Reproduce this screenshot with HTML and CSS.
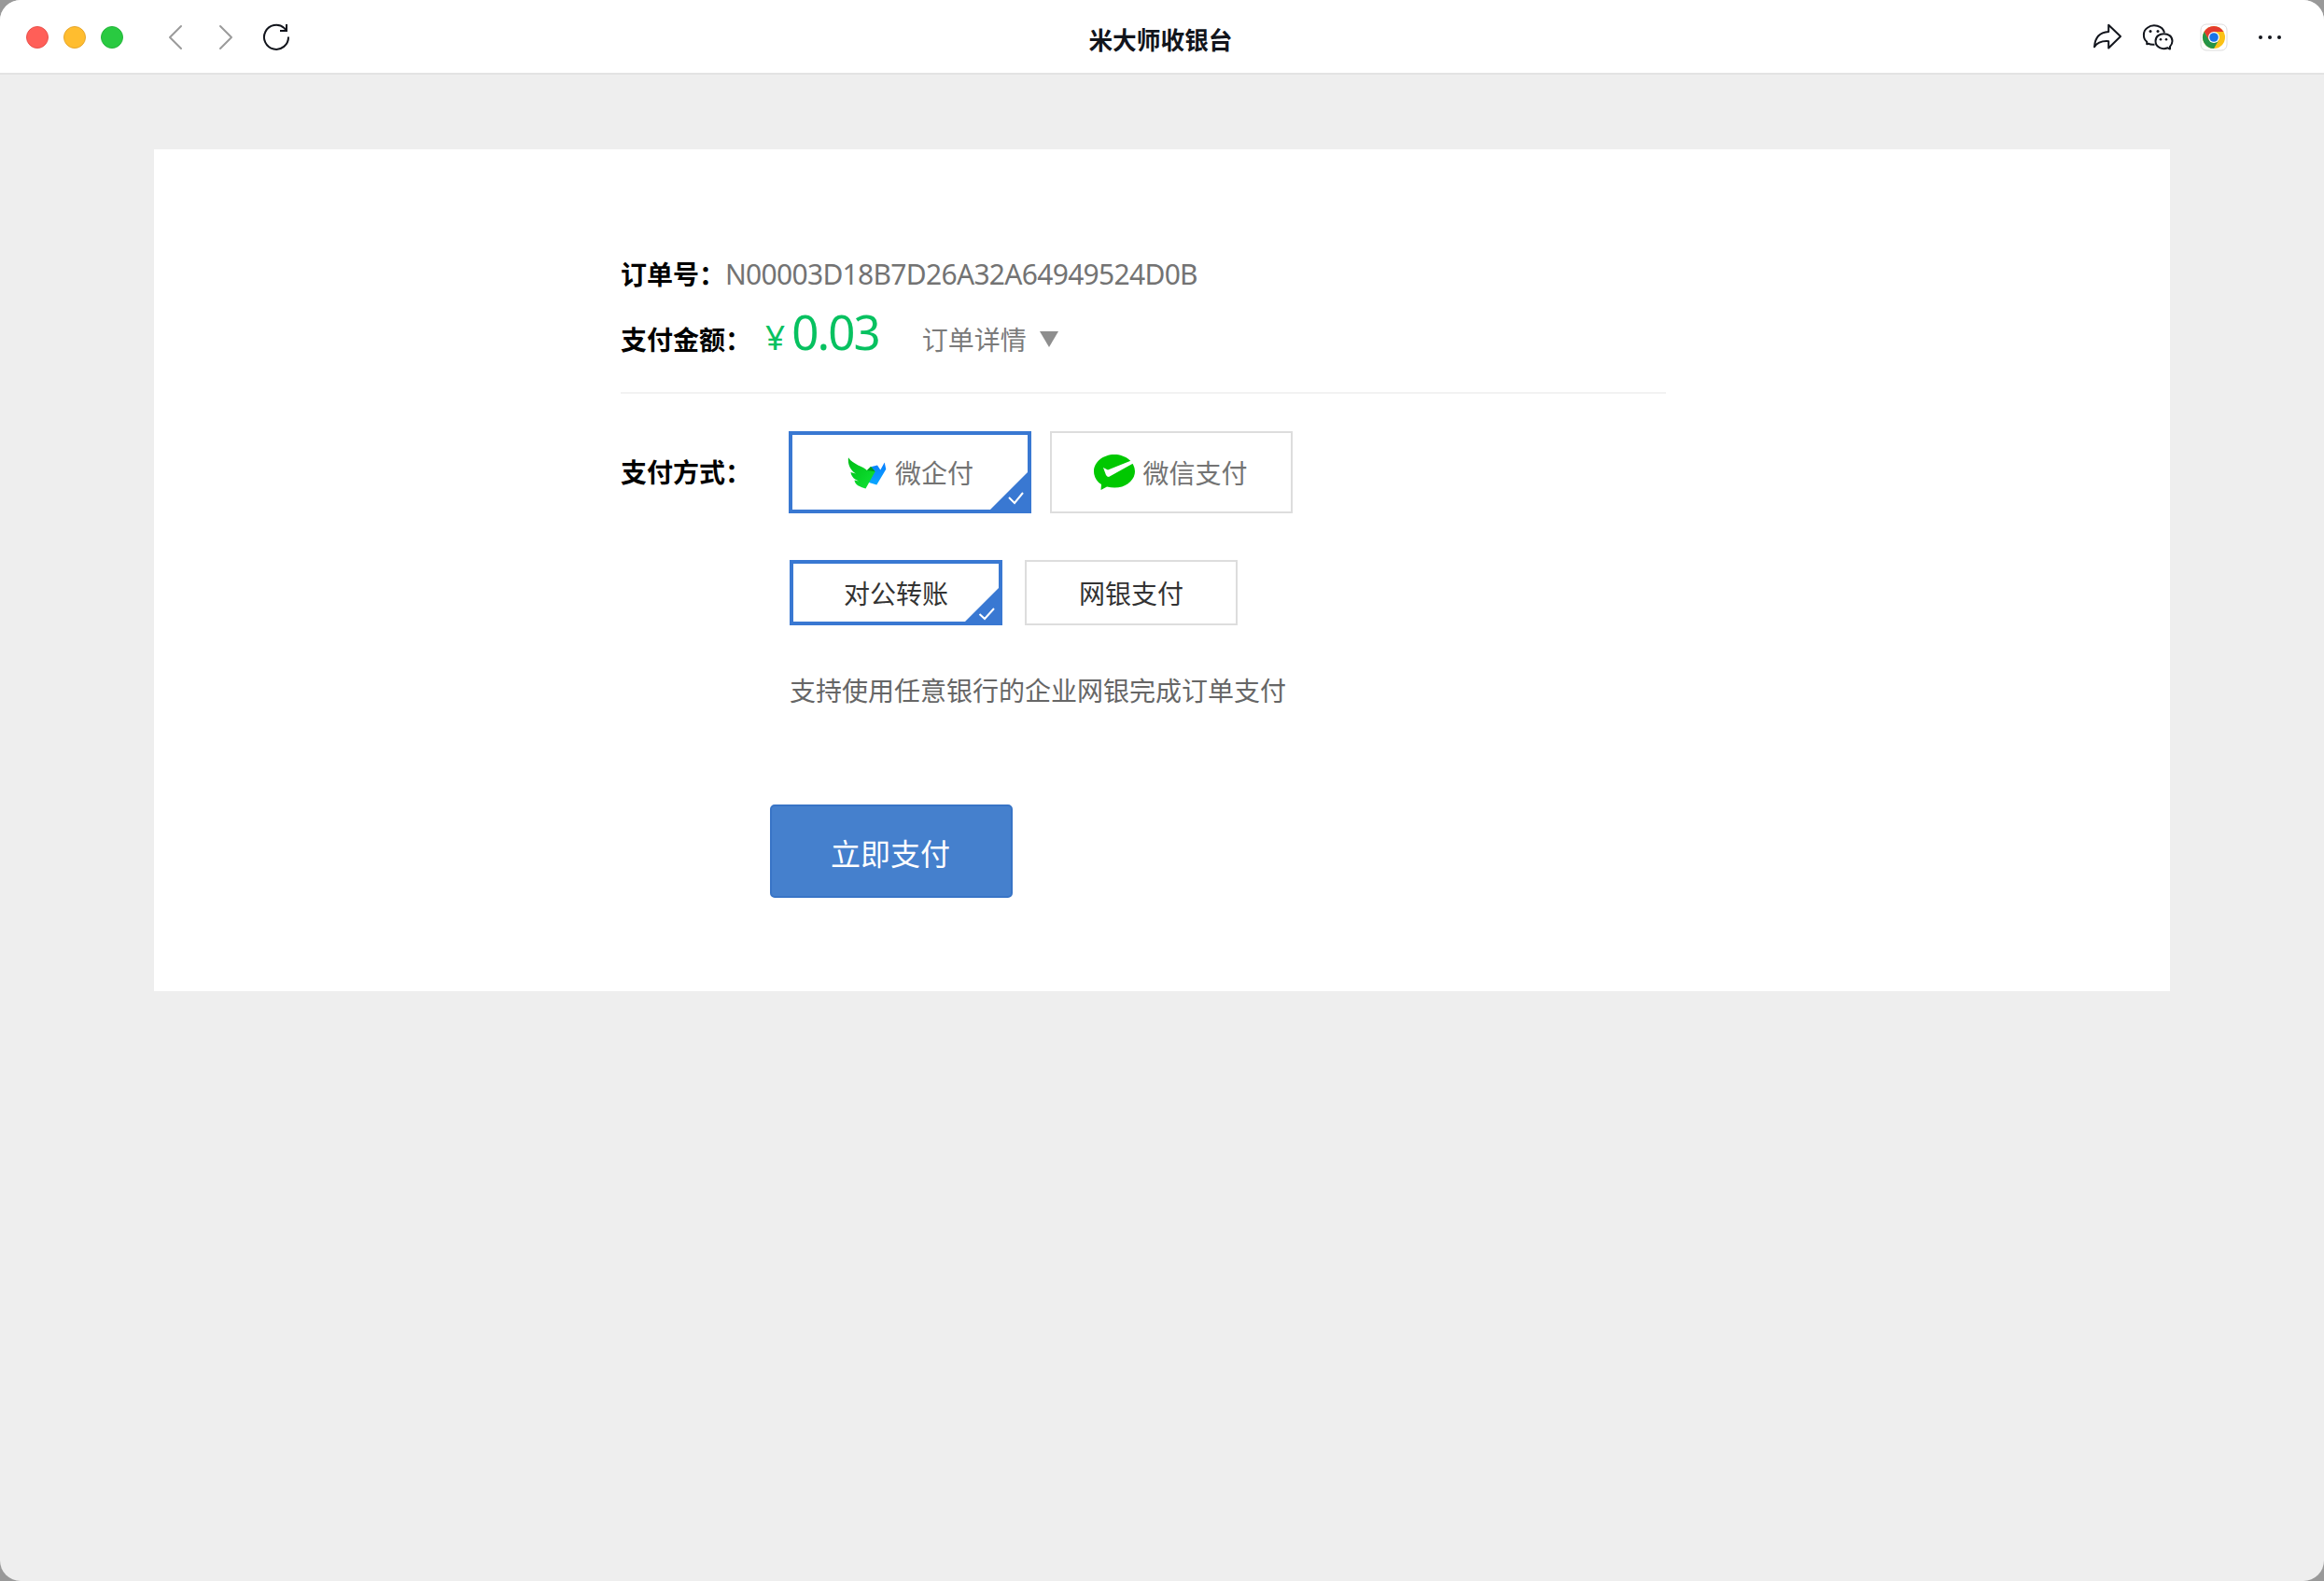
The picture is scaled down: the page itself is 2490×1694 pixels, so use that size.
FILE: index.html
```html
<!DOCTYPE html>
<html lang="zh-CN">
<head>
<meta charset="utf-8">
<title>米大师收银台</title>
<link rel="stylesheet" href="styles.css">
</head>
<body>
<div class="window">
  <header class="titlebar">
    <div class="controls">
      <span class="light red"></span><span class="light yellow"></span><span class="light green"></span>
      <svg class="nav" width="150" height="40" viewBox="170 20 150 40" fill="none" stroke-linecap="round" stroke-linejoin="round">
        <path d="M194 28 182 40 194 52M236 28 248 40 236 52" stroke="#9b9b9b" stroke-width="2"/>
        <path d="M309 39.500A13 13 0 1 1 304.500 30L306.500 32.500" stroke="#12151c" stroke-width="2" stroke-linecap="butt"/>
        <path d="M307 26V33H300" stroke="#12151c" stroke-width="2" stroke-linecap="butt" stroke-linejoin="miter"/>
      </svg>
    </div>
    <h1 class="title">米大师收银台</h1>
    <svg class="tools" width="210" height="40" viewBox="2240 20 210 40" fill="none" stroke="#12151c" stroke-width="2" stroke-linejoin="round">
      <path d="M2259.200 26.700 2272 39 2259.200 51.500V44.200C2252 43.700 2247 45.500 2244 50.300C2244.500 41 2249.500 34.700 2259.200 34Z"/>
      <path d="M2308.500 47.800C2305 48 2303 47.600 2302.200 46.800L2300.200 47.300V44.800C2295.500 41 2296 33 2300.500 30C2307 25 2317 27.500 2319 35"/>
      <path d="M2325 49.800V52.500L2322.600 51.300C2317 53.500 2309.500 51 2309.500 44C2309.500 33.500 2327.500 33.500 2327.500 44C2327.500 46 2326.300 48.300 2325 49.800Z"/>
      <g fill="#12151c" stroke="none"><circle cx="2304" cy="33.500" r="1.500"/><circle cx="2312" cy="33.500" r="1.500"/><circle cx="2315" cy="42.200" r="1.300"/><circle cx="2321" cy="42.200" r="1.300"/><circle cx="2422" cy="40" r="2"/><circle cx="2432" cy="40" r="2"/><circle cx="2442" cy="40" r="2"/></g>
      <rect x="2358" y="26" width="28" height="28" rx="6" fill="#fff" stroke="#dcdcdc" stroke-width="1"/>
      <g stroke="none">
        <circle cx="2372" cy="40" r="12" fill="#fbc116"/>
        <path d="M2361.600 34A12 12 0 0 1 2382.400 34H2372L2366.800 43Z" fill="#e33b2e"/>
        <path d="M2361.600 34 2366.800 43 2372 46 2377.200 43 2372 52A12 12 0 0 1 2361.600 34" fill="#259447"/>
        <circle cx="2372" cy="40" r="6" fill="#fff"/><circle cx="2372" cy="40" r="4.800" fill="#1a73e8"/>
      </g>
    </svg>
  </header>
  <main class="card">
    <section class="order">
      <div class="row"><span class="label">订单号：</span><span class="number">N00003D18B7D26A32A64949524D0B</span></div>
      <div class="row amount"><span class="label">支付金额：</span><span class="yen">¥</span><span class="price">0.03</span><span class="detail">订单详情</span><span class="arrow"></span></div>
    </section>
    <section class="payment">
      <div class="label">支付方式：</div>
      <div class="choices">
        <div class="methods">
          <div class="option selected">
            <svg class="wing" width="42" height="34" viewBox="908 491.500 42 34">
              <defs><linearGradient id="wing" x2="1" y2="1"><stop stop-color="#00bd16"/><stop offset="1" stop-color="#10e536"/></linearGradient><linearGradient id="ribbon" x2="0" y2="1"><stop stop-color="#087cff"/><stop offset="1" stop-color="#0aa8ff"/></linearGradient></defs>
              <path d="M933 501.700 940 500 943.300 505 947.700 497 949.300 504.300 939.300 521 931 518.500Z" fill="url(#ribbon)"/>
              <path d="M909 491.700C914 499.500 925 501 929 505.500L933 501.500 937.700 506.700 927.500 525C921 523 916 521 915.500 516L920 517C915 515 912 512 911.500 507.500L917 509C911 505 908 499 909 491.700Z" fill="url(#wing)"/>
              <path d="M929 505.500 933 501.500 937.700 506.700Z" fill="#009c1c"/>
            </svg><span class="brand">微企付</span>
            <svg class="corner" width="40" height="40" viewBox="0 0 40 40"><path d="M40 0V40H0Z" fill="#3978d2"/><path d="M20 28 26 34 35 23" transform="translate(0 -1)" fill="none" stroke="#fff" stroke-width="2"/></svg>
          </div>
          <div class="option">
            <svg class="wechat" width="46" height="40" viewBox="1172 486 46 40"><path d="M1195 487C1183 487 1173 495 1173 505C1173 511 1176 516 1181 519L1180.500 525 1187 521.500C1204 526 1217 516 1217 505C1217 495 1207 487 1195 487Z" fill="#00c800"/><path d="M1183 501 1188 503.500 1213 493.500 1216 496 1189 511Q1187 511 1186 509Z" fill="#fff"/></svg><span class="brand">微信支付</span>
          </div>
        </div>
        <div class="types">
          <div class="option small selected">对公转账<svg class="corner" width="36" height="36" viewBox="0 0 36 36"><path d="M36 0V36H0Z" fill="#3978d2"/><path d="M15.500 28 21 33 31 22" fill="none" stroke="#fff" stroke-width="2"/></svg></div>
          <div class="option small">网银支付</div>
        </div>
        <p class="note">支持使用任意银行的企业网银完成订单支付</p>
      </div>
    </section>
    <button class="pay">立即支付</button>
  </main>
</div>
</body>
</html>
```
FILE: styles.css
```css
* { box-sizing: border-box; }
body { margin: 0; background: #999; font-family: "Noto Sans", "Noto Sans CJK SC", sans-serif; }
.window { height: 1694px; background: #eee; border-radius: 22px; overflow: hidden; }
.titlebar { height: 80px; background: #fff; border-bottom: 2px solid #e3e3e3; display: grid; grid-template-columns: 1fr auto 1fr; align-items: start; }
.controls { display: flex; align-items: center; gap: 16px; height: 80px; padding-left: 28px; }
.light { width: 24px; height: 24px; border-radius: 50%; border: 1px solid; }
.red { background: #ff5f58; border-color: #e9514c; }
.yellow { background: #ffbd2f; border-color: #e6a62b; }
.green { background: #29ca41; border-color: #24b53a; }
.nav { margin-left: 22px; }
.title { margin: 0; padding-right: 3px; font: 700 25.700px/84px "Noto Sans CJK SC", sans-serif; color: #12151c; }
.tools { justify-self: end; margin: 20px 40px 0 0; }
.card { width: 2160px; height: 902px; margin: 80px auto 0; padding: 108px 500px 0; background: #fff; font-size: 28px; }
.order { width: 1120px; height: 154px; border-bottom: 2px solid #f2f2f2; }
.row { display: flex; align-items: center; height: 50px; }
.label { font-family: "Noto Sans CJK SC", sans-serif; font-weight: 700; color: #000; white-space: nowrap; }
.number { color: #737373; font-size: 30px; letter-spacing: -0.700px; }
.amount { align-items: baseline; margin-top: 2px; }
.yen, .price { color: #07c160; }
.yen { font-size: 37px; margin-left: 15px; }
.price { font-size: 51px; letter-spacing: -1.900px; margin-left: 7px; }
.detail { color: #7b7b7b; margin-left: 46px; }
.arrow { position: relative; top: -3px; border: 10px solid transparent; border-top: 17px solid #8e8e8e; border-bottom: 0; margin-left: 14px; }
.payment { display: flex; margin-top: 40px; }
.payment > .label { width: 180px; line-height: 86px; }
.methods, .types { display: flex; gap: 20px; }
.option { position: relative; display: flex; align-items: center; justify-content: center; width: 260px; height: 88px; border: 2px solid #ddd; color: #333; }
.option.selected { border: 4px solid #3978d2; }
.brand { color: #737373; margin-left: 9px; }
.wing { margin-left: 1px; margin-top: 2px; }
.wechat { margin: -1px 0 0 -2px; }
.wechat + .brand { margin-left: 7px; }
.corner { position: absolute; right: 0; bottom: 0; }
.types { gap: 24px; margin: 50px 0 0 1px; }
.small { width: 228px; height: 70px; }
.note { margin: 49px 0 0 1px; line-height: 42px; color: #666; }
.pay { display: block; width: 260px; height: 100px; margin: 101px 0 0 160px; padding: 1px 2px 0 0; border: 2px solid #3874c6; border-radius: 5px; background: #4580cd; color: #fff; font: 32px "Noto Sans CJK SC", sans-serif; }
```
